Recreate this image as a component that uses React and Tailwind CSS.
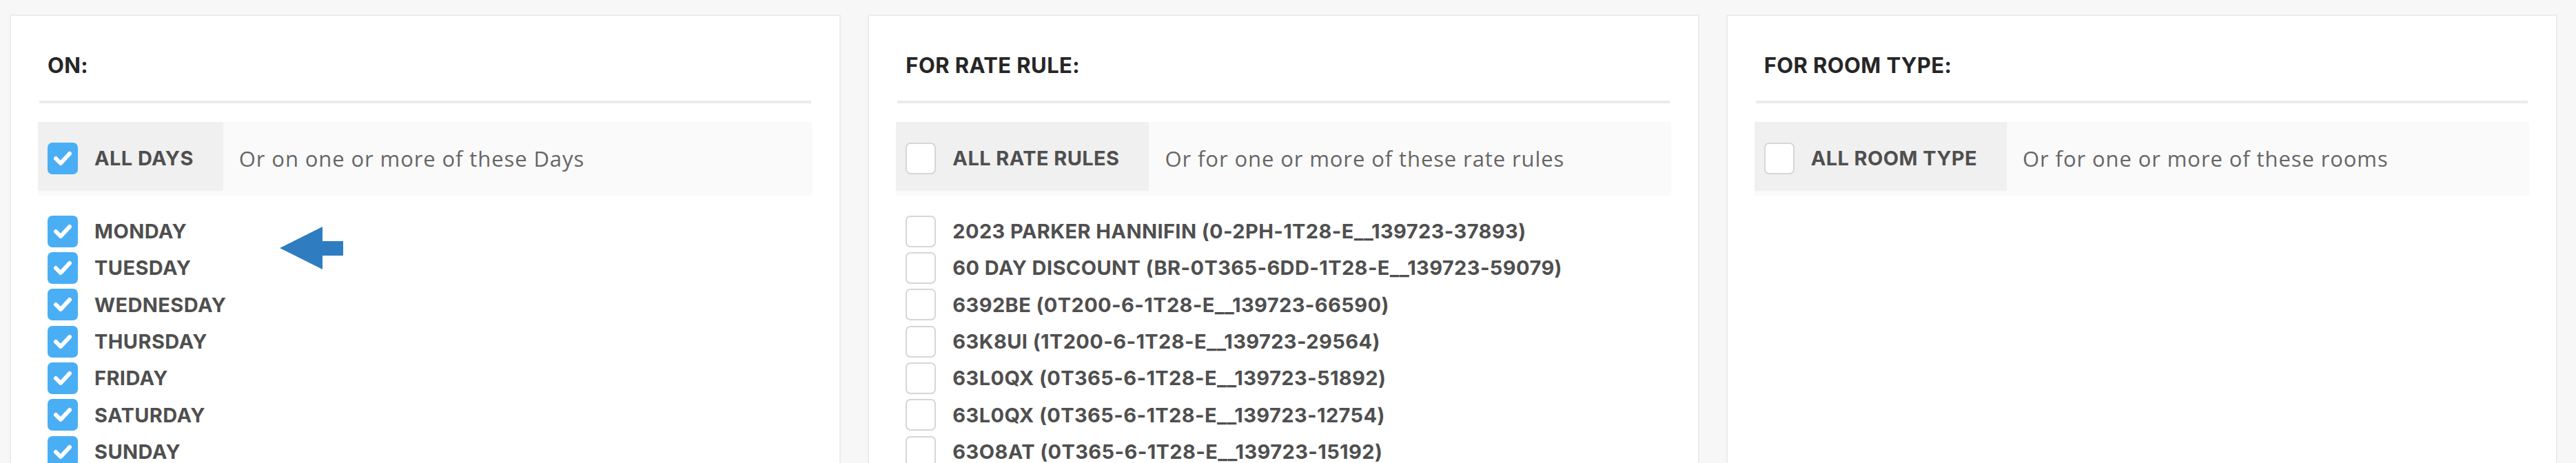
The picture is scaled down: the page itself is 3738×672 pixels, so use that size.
import React from "react";

const days = ["MONDAY", "TUESDAY", "WEDNESDAY", "THURSDAY", "FRIDAY", "SATURDAY", "SUNDAY"];

const rateRules = [
  "2023 PARKER HANNIFIN (0-2PH-1T28-E__139723-37893)",
  "60 DAY DISCOUNT (BR-0T365-6DD-1T28-E__139723-59079)",
  "6392BE (0T200-6-1T28-E__139723-66590)",
  "63K8UI (1T200-6-1T28-E__139723-29564)",
  "63L0QX (0T365-6-1T28-E__139723-51892)",
  "63L0QX (0T365-6-1T28-E__139723-12754)",
  "63O8AT (0T365-6-1T28-E__139723-15192)",
];

const bold = "font-['Inter','Liberation_Sans',sans-serif] font-bold";

function Checkbox({ checked }) {
  if (checked) {
    return (
      <span className="flex h-[46px] w-[44px] shrink-0 items-center justify-center rounded-[7px] bg-[#4aaef5]">
        <svg width="30" height="26" viewBox="0 0 30 26">
          <polyline points="5,13 12,20 25,6" fill="none" stroke="#fff" strokeWidth="6" strokeLinecap="round" strokeLinejoin="round" />
        </svg>
      </span>
    );
  }
  return <span className="h-[46px] w-[44px] shrink-0 rounded-[7px] border-2 border-[#d6d6d6] bg-white" />;
}

function Card({ title, allLabel, allChecked, hint, items, checked, children }) {
  return (
    <div className="relative h-[720px] border-2 border-[#ececec] bg-white px-[39px] pt-[56px]">
      <h2 className={`${bold} pl-[14px] text-[31px] leading-[31px] tracking-[0.4px] text-[#262626]`}>{title}</h2>
      <div className="mx-[2px] mt-[36px] h-[4px] bg-[#ebebeb]" />

      <div className="mt-[27px] flex h-[107px] items-start bg-[#fafafa]">
        <div className="flex h-[100px] items-center gap-[24px] bg-[#f0f0f0] pl-[14px] pr-[43px] pt-[6px]">
          <Checkbox checked={allChecked} />
          <span className={`${bold} whitespace-nowrap text-[29px] tracking-[0.4px] text-[#4f4f4f]`}>{allLabel}</span>
        </div>
        <div className="flex h-[100px] items-center pl-[23px] pt-[6px] font-['Open_Sans','Liberation_Sans',sans-serif] text-[31px] tracking-[0.9px] text-[#666]">
          {hint}
        </div>
      </div>

      <ul className="mt-[25px] flex flex-col pl-[14px]">
        {items.map((label, i) => (
          <li key={i} className="flex h-[53.33px] items-center gap-[24px]">
            <Checkbox checked={checked} />
            <span className={`${bold} whitespace-nowrap text-[29px] tracking-[0.4px] text-[#4f4f4f]`}>{label}</span>
          </li>
        ))}
      </ul>
      {children}
    </div>
  );
}

export default function App() {
  return (
    <div className="h-[672px] w-[3738px] overflow-hidden bg-[#f7f7f7] pl-[14px] pr-[27px] pt-[21px]">
      <div className="grid grid-cols-3 gap-[39px]">
        <Card
          title="ON:"
          allLabel="ALL DAYS"
          allChecked
          hint="Or on one or more of these Days"
          items={days}
          checked
        >
          {/* annotation arrow pointing at the day list */}
          <svg className="absolute left-[390px] top-[306px]" width="92" height="62" viewBox="0 0 92 62">
            <polygon points="0,31 62,0 62,21 92,21 92,42 62,42 62,62" fill="#2f7dc0" />
          </svg>
        </Card>
        <Card
          title="FOR RATE RULE:"
          allLabel="ALL RATE RULES"
          hint="Or for one or more of these rate rules"
          items={rateRules}
        />
        <Card
          title="FOR ROOM TYPE:"
          allLabel="ALL ROOM TYPE"
          hint="Or for one or more of these rooms"
          items={[]}
        />
      </div>
    </div>
  );
}
